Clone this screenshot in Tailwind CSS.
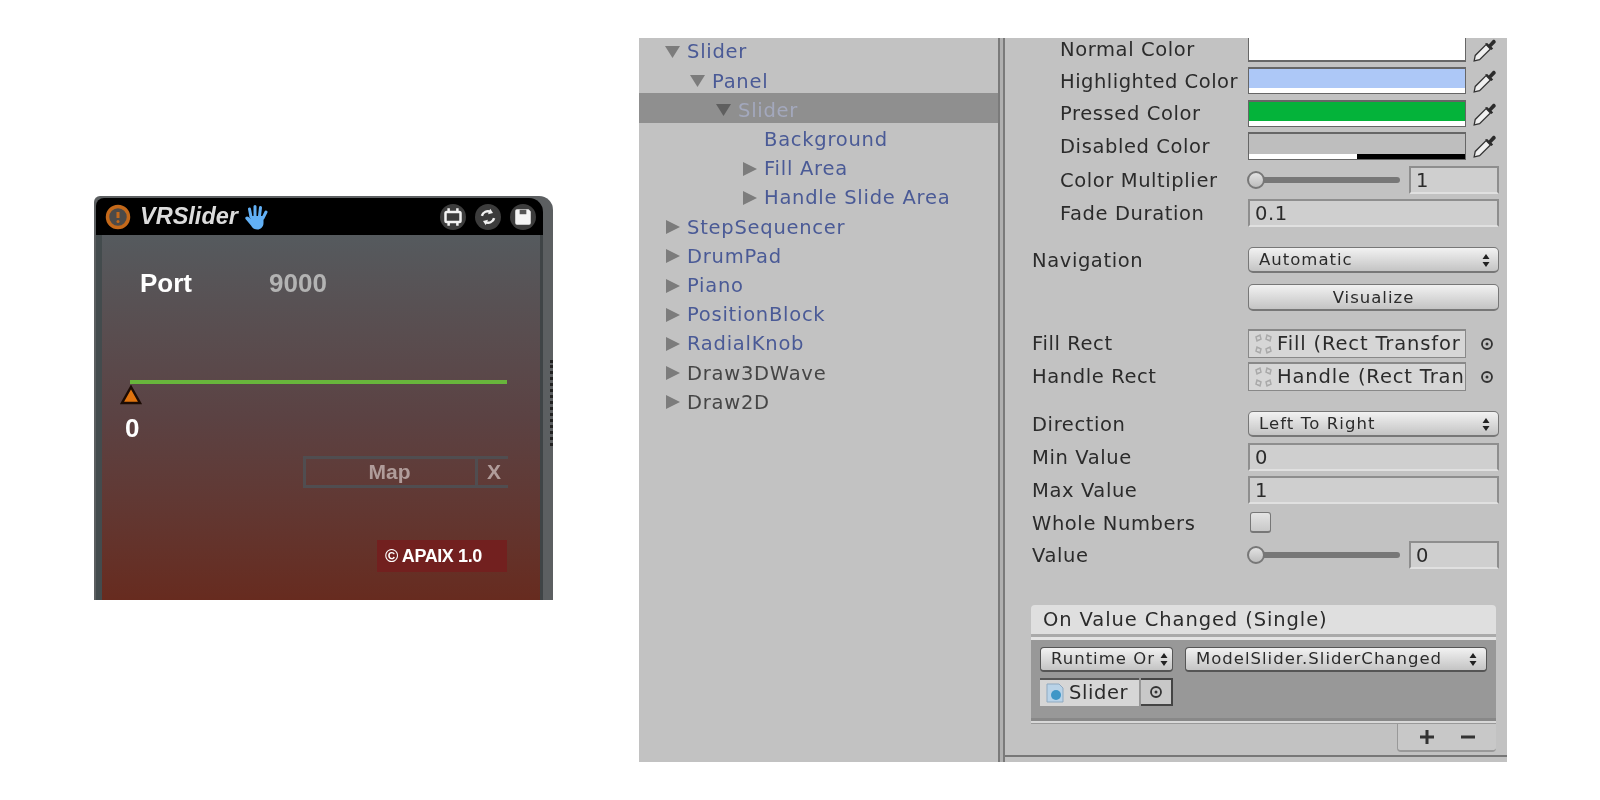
<!DOCTYPE html>
<html lang="en">
<head>
  <meta charset="UTF-8" />
  <title>VRSlider</title>
  <script src="https://cdn.jsdelivr.net/npm/@tailwindcss/browser@4"></script>
</head>
<body class="bg-white h-[800px] overflow-hidden">
  <div class="flex items-start">

    <!-- VRSlider device -->
    <div class="ml-[94px] mt-[196px] w-[459px] h-[404px] bg-[#5c5f61] rounded-tr-[14px] rounded-tl-[6px] flex flex-col font-['Liberation_Sans',sans-serif] blur-[0.5px] relative">
      <div class="ml-[2px] mt-[2px] w-[447px] h-[37px] bg-black rounded-tl-[8px] rounded-tr-[14px] flex items-center shrink-0">
        <svg class="ml-[9px] w-[26px] h-[26px]" viewBox="0 0 26 26"><circle cx="13" cy="13" r="10.5" fill="#4c4a48" stroke="#c4691a" stroke-width="3.5"/><path d="M13 8v6" stroke="#c4691a" stroke-width="3"/><circle cx="13" cy="17.5" r="1.5" fill="#c4691a"/></svg>
        <span class="ml-[9px] text-[23.500px] font-bold italic text-[#dcdcdc] leading-none">VRSlider</span>
        <svg class="ml-[6px] w-[24px] h-[28px]" viewBox="0 0 24 28"><path d="M7 14L5.500 6M11 13V3.500M15.500 13L16.500 4.500M19 15L22 9" stroke="#62b0f5" stroke-width="3" stroke-linecap="round" fill="none"/><path d="M5.500 13h14v7c0 4-3 6.500-6 6.500-3.500 0-5-1.500-6.500-4L1.500 16c-1-2 1.500-3.500 3-2l2.500 2z" fill="#62b0f5"/></svg>
        <div class="ml-auto mr-[7px] flex gap-[9px]">
          <div class="w-[26px] h-[26px] rounded-full bg-[#3c3c3c] flex items-center justify-center">
            <svg class="w-[20px] h-[20px]" viewBox="0 0 16 16"><rect x="2" y="4" width="12" height="8" rx="1" fill="none" stroke="#f2f2f2" stroke-width="2"/><path d="M4.500 1v3M11.500 1v3M4.500 12v3M11.500 12v3" stroke="#f2f2f2" stroke-width="2"/></svg>
          </div>
          <div class="w-[26px] h-[26px] rounded-full bg-[#3c3c3c] flex items-center justify-center">
            <svg class="w-[20px] h-[20px]" viewBox="0 0 18 18"><path d="M3.500 8a5.500 5.500 0 0 1 8-3.500" fill="none" stroke="#f2f2f2" stroke-width="2.200"/><path d="M11 1.500l2.500 4-4.500 1z" fill="#f2f2f2"/><path d="M14.500 10a5.500 5.500 0 0 1-8 3.500" fill="none" stroke="#f2f2f2" stroke-width="2.200"/><path d="M7 16.500l-2.500-4 4.500-1z" fill="#f2f2f2"/></svg>
          </div>
          <div class="w-[26px] h-[26px] rounded-full bg-[#3c3c3c] flex items-center justify-center">
            <svg class="w-[20px] h-[20px]" viewBox="0 0 18 18"><path d="M2 3.500A1.500 1.500 0 0 1 3.500 2H14l2 2v10.500a1.500 1.500 0 0 1-1.500 1.500h-11A1.500 1.500 0 0 1 2 14.500z" fill="#f4f4f4"/><rect x="6" y="2.500" width="6" height="4" fill="#555"/></svg>
          </div>
        </div>
      </div>
      <div class="ml-[2px] w-[447px] flex-1 bg-linear-to-b from-[#555a5e] via-[#5b4243] to-[#672b1f] border-l-[6px] border-r-[3px] border-l-[#434b4d] border-r-[#3f4446] relative">
        <div class="flex mt-[28px] ml-[38px] text-[26px] font-bold leading-[40px]">
          <span class="text-white w-[129px]">Port</span>
          <span class="text-[#b3b3b3]">9000</span>
        </div>
        <div class="mt-[77px] ml-[28px] w-[377px] h-[4px] bg-[#68b53c]"></div>
        <svg class="ml-[18px] mt-[1px] w-[22px] h-[20px]" viewBox="0 0 22 20"><path d="M11 2L20 18H2z" fill="#e0740f" stroke="#1c0c05" stroke-width="2.500"/></svg>
        <div class="ml-[23px] mt-[5px] text-[26px] font-bold text-white leading-[36px]">0</div>
        <div class="mt-[10px] ml-[201px] flex h-[32px] w-[205px] text-[21px] font-bold text-[#b09c9a]">
          <div class="w-[175px] border-[3px] border-[#504d50] flex items-center justify-center pr-[2px]">Map</div>
          <div class="flex-1 border-y-[3px] border-[#504d50] flex items-center justify-center pl-[2px]">X</div>
        </div>
        <div class="mt-[52px] ml-[275px] w-[130px] h-[32px] bg-[#72201f] flex items-center pl-[8px] text-[18px] font-bold text-white tracking-[-0.4px]">© APAIX 1.0</div>
      </div>
      <div class="absolute right-0 top-[164px] h-[86px] w-[3px] border-r-[3px] border-dotted border-[#222]"></div>
    </div>

    <!-- Unity editor -->
    <div class="ml-[86px] mt-[38px] w-[868px] h-[724px] bg-[#c2c2c2] flex font-['DejaVu_Sans',sans-serif] text-[20px] text-[#2b2b2b] blur-[0.5px]">

      <!-- Hierarchy -->
      <div class="w-[359px] text-[#4a5a96] text-[19.500px] tracking-[0.75px]">
        <div class="h-[26.200px] pt-[2px] pl-[26px] flex items-center">
          <svg class="w-[22px] h-[14px] shrink-0" viewBox="0 0 22 14"><path d="M0 1h15L7.500 13z" fill="#7c7c7c"/></svg>Slider
        </div>
        <div class="h-[29.200px] pt-[5px] pl-[51px] flex items-center">
          <svg class="w-[22px] h-[14px] shrink-0" viewBox="0 0 22 14"><path d="M0 1h15L7.500 13z" fill="#7c7c7c"/></svg>Panel
        </div>
        <div class="h-[29.200px] pt-[5px] pl-[77px] flex items-center bg-[#8f8f8f] text-[#a3a8bd]">
          <svg class="w-[22px] h-[14px] shrink-0" viewBox="0 0 22 14"><path d="M0 1h15L7.500 13z" fill="#5f5f5f"/></svg>Slider
        </div>
        <div class="h-[29.200px] pt-[5px] pl-[125px] flex items-center">Background</div>
        <div class="h-[29.200px] pt-[5px] pl-[103px] flex items-center">
          <svg class="w-[22px] h-[16px] shrink-0" viewBox="0 0 22 16"><path d="M1 1v14l14-7z" fill="#7c7c7c"/></svg>Fill Area
        </div>
        <div class="h-[29.200px] pt-[5px] pl-[103px] flex items-center">
          <svg class="w-[22px] h-[16px] shrink-0" viewBox="0 0 22 16"><path d="M1 1v14l14-7z" fill="#7c7c7c"/></svg>Handle Slide Area
        </div>
        <div class="h-[29.200px] pt-[5px] pl-[26px] flex items-center">
          <svg class="w-[22px] h-[16px] shrink-0" viewBox="0 0 22 16"><path d="M1 1v14l14-7z" fill="#7c7c7c"/></svg>StepSequencer
        </div>
        <div class="h-[29.200px] pt-[5px] pl-[26px] flex items-center">
          <svg class="w-[22px] h-[16px] shrink-0" viewBox="0 0 22 16"><path d="M1 1v14l14-7z" fill="#7c7c7c"/></svg>DrumPad
        </div>
        <div class="h-[29.200px] pt-[5px] pl-[26px] flex items-center">
          <svg class="w-[22px] h-[16px] shrink-0" viewBox="0 0 22 16"><path d="M1 1v14l14-7z" fill="#7c7c7c"/></svg>Piano
        </div>
        <div class="h-[29.200px] pt-[5px] pl-[26px] flex items-center">
          <svg class="w-[22px] h-[16px] shrink-0" viewBox="0 0 22 16"><path d="M1 1v14l14-7z" fill="#7c7c7c"/></svg>PositionBlock
        </div>
        <div class="h-[29.200px] pt-[5px] pl-[26px] flex items-center">
          <svg class="w-[22px] h-[16px] shrink-0" viewBox="0 0 22 16"><path d="M1 1v14l14-7z" fill="#7c7c7c"/></svg>RadialKnob
        </div>
        <div class="h-[29.200px] pt-[5px] pl-[26px] flex items-center text-[#454545]">
          <svg class="w-[22px] h-[16px] shrink-0" viewBox="0 0 22 16"><path d="M1 1v14l14-7z" fill="#7c7c7c"/></svg>Draw3DWave
        </div>
        <div class="h-[29.200px] pt-[5px] pl-[26px] flex items-center text-[#454545]">
          <svg class="w-[22px] h-[16px] shrink-0" viewBox="0 0 22 16"><path d="M1 1v14l14-7z" fill="#7c7c7c"/></svg>Draw2D
        </div>
      </div>

      <div class="w-[7px] border-x-[2px] border-[#7a7a7a] bg-[#b0b0b0]"></div>

      <!-- Inspector -->
      <div class="flex-1 flex flex-col">
        <div class="h-[719px] border-b-[2px] border-[#777] pl-[27px] tracking-[0.6px] text-[19.500px]">

          <div class="flex items-center h-[24px]">
            <span class="w-[216px] pl-[28px]">Normal Color</span>
            <div class="w-[218px] h-full bg-white border-b-2 border-x border-[#666]"></div>
            <svg class="ml-[6px] w-[26px] h-[26px]" viewBox="0 0 24 24"><path d="M2 22l1-5L13 7l4 4L7 21z" fill="#f0f0f0" stroke="#333" stroke-width="1.200"/><path d="M12 6l6 6 1.500-1.500-1.500-1.500 3.500-3.500c1.500-1.500-1-4-2.500-2.500L15.500 7l-1.500-1.500z" fill="#2c2c2c"/></svg>
          </div>

          <div class="flex items-center h-[27px] mt-[5px]">
            <span class="w-[216px] pl-[28px] pt-[2px] whitespace-nowrap tracking-[0.5px]">Highlighted Color</span>
            <div class="w-[218px] h-full border border-[#666] border-t-2 flex flex-col">
              <div class="flex-1 bg-[#adc8f7]"></div><div class="h-[5px] bg-white"></div>
            </div>
            <svg class="ml-[6px] w-[26px] h-[26px]" viewBox="0 0 24 24"><path d="M2 22l1-5L13 7l4 4L7 21z" fill="#f0f0f0" stroke="#333" stroke-width="1.200"/><path d="M12 6l6 6 1.500-1.500-1.500-1.500 3.500-3.500c1.500-1.500-1-4-2.500-2.500L15.500 7l-1.500-1.500z" fill="#2c2c2c"/></svg>
          </div>

          <div class="flex items-center h-[27px] mt-[6px]">
            <span class="w-[216px] pl-[28px]">Pressed Color</span>
            <div class="w-[218px] h-full border border-[#666] border-t-2 flex flex-col">
              <div class="flex-1 bg-[#04b33a]"></div><div class="h-[5px] bg-white"></div>
            </div>
            <svg class="ml-[6px] w-[26px] h-[26px]" viewBox="0 0 24 24"><path d="M2 22l1-5L13 7l4 4L7 21z" fill="#f0f0f0" stroke="#333" stroke-width="1.200"/><path d="M12 6l6 6 1.500-1.500-1.500-1.500 3.500-3.500c1.500-1.500-1-4-2.500-2.500L15.500 7l-1.500-1.500z" fill="#2c2c2c"/></svg>
          </div>

          <div class="flex items-center h-[28px] mt-[5px]">
            <span class="w-[216px] pl-[28px] pt-[2px]">Disabled Color</span>
            <div class="w-[218px] h-full border border-[#666] border-t-2 flex flex-col">
              <div class="flex-1 bg-[#bebebe]"></div>
              <div class="h-[5px] flex"><div class="w-[108px] bg-white"></div><div class="flex-1 bg-black"></div></div>
            </div>
            <svg class="ml-[6px] w-[26px] h-[26px]" viewBox="0 0 24 24"><path d="M2 22l1-5L13 7l4 4L7 21z" fill="#f0f0f0" stroke="#333" stroke-width="1.200"/><path d="M12 6l6 6 1.500-1.500-1.500-1.500 3.500-3.500c1.500-1.500-1-4-2.500-2.500L15.500 7l-1.500-1.500z" fill="#2c2c2c"/></svg>
          </div>

          <div class="flex items-center h-[28px] mt-[6px]">
            <span class="w-[216px] pl-[28px] pt-[2px]">Color Multiplier</span>
            <div class="w-[152px] h-[6px] bg-[#777] rounded-full relative">
              <div class="absolute left-[-1px] top-[-6px] w-[18px] h-[18px] rounded-full bg-linear-to-b from-[#e2e2e2] to-[#bdbdbd] border-2 border-[#777]"></div>
            </div>
            <div class="ml-[9px] w-[90px] h-full bg-[#cfcfcf] border-2 border-[#8e8e8e] border-b-[#e0e0e0] pl-[5px] leading-[26px]">1</div>
          </div>

          <div class="flex items-center h-[28px] mt-[5px]">
            <span class="w-[216px] pl-[28px] pt-[2px]">Fade Duration</span>
            <div class="w-[251px] h-full bg-[#cfcfcf] border-2 border-[#8e8e8e] border-b-[#e0e0e0] pl-[5px] leading-[26px]">0.1</div>
          </div>

          <div class="flex items-center h-[26px] mt-[20px]">
            <span class="w-[216px] pt-[2px]">Navigation</span>
            <div class="w-[251px] h-full bg-linear-to-b from-[#f2f2f2] to-[#c4c4c4] border border-[#777] border-b-2 rounded-[5px] flex items-center justify-between pl-[10px] pr-[8px] pt-[2px] text-[16.500px] tracking-[1px]">
              Automatic
              <svg class="w-[8px] h-[13px]" viewBox="0 0 8 13"><path d="M4 0l3.500 5h-7zM4 13l3.500-5h-7z" fill="#222"/></svg>
            </div>
          </div>

          <div class="flex items-center h-[27px] mt-[11px]">
            <span class="w-[216px]"></span>
            <div class="w-[251px] h-full bg-linear-to-b from-[#f2f2f2] to-[#c4c4c4] border border-[#777] border-b-2 rounded-[5px] flex items-center justify-center pt-[2px] text-[16.500px] tracking-[1px]">Visualize</div>
          </div>

          <div class="flex items-center h-[29px] mt-[18px]">
            <span class="w-[216px]">Fill Rect</span>
            <div class="w-[218px] h-full bg-[#d6d6d6] border border-[#888] border-t-2 flex items-center overflow-hidden whitespace-nowrap tracking-[0.85px]">
              <svg class="w-[27px] h-[24px] shrink-0 ml-[1px]" viewBox="0 0 25 24"><path d="M5 5l4-2 1 4-4 2zM20 5l-4-2-1 4 4 2zM5 19l4 2 1-4-4-2zM20 19l-4 2-1-4 4-2z" fill="none" stroke="#a9a9a9" stroke-width="1.500"/></svg>Fill (Rect Transfor
            </div>
            <svg class="ml-[14px] w-[14px] h-[14px]" viewBox="0 0 14 14"><circle cx="7" cy="7" r="5" fill="none" stroke="#333" stroke-width="1.800"/><circle cx="7" cy="7" r="1.500" fill="#333"/></svg>
          </div>

          <div class="flex items-center h-[29px] mt-[4px]">
            <span class="w-[216px]">Handle Rect</span>
            <div class="w-[218px] h-full bg-[#d6d6d6] border border-[#888] border-t-2 flex items-center overflow-hidden whitespace-nowrap tracking-[0.85px]">
              <svg class="w-[27px] h-[24px] shrink-0 ml-[1px]" viewBox="0 0 25 24"><path d="M5 5l4-2 1 4-4 2zM20 5l-4-2-1 4 4 2zM5 19l4 2 1-4-4-2zM20 19l-4 2-1-4 4-2z" fill="none" stroke="#a9a9a9" stroke-width="1.500"/></svg>Handle (Rect Tran
            </div>
            <svg class="ml-[14px] w-[14px] h-[14px]" viewBox="0 0 14 14"><circle cx="7" cy="7" r="5" fill="none" stroke="#333" stroke-width="1.800"/><circle cx="7" cy="7" r="1.500" fill="#333"/></svg>
          </div>

          <div class="flex items-center h-[26px] mt-[20px]">
            <span class="w-[216px] pt-[2px]">Direction</span>
            <div class="w-[251px] h-full bg-linear-to-b from-[#f2f2f2] to-[#c4c4c4] border border-[#777] border-b-2 rounded-[5px] flex items-center justify-between pl-[10px] pr-[8px] pt-[2px] text-[16.500px] tracking-[1.100px]">
              Left To Right
              <svg class="w-[8px] h-[13px]" viewBox="0 0 8 13"><path d="M4 0l3.500 5h-7zM4 13l3.500-5h-7z" fill="#222"/></svg>
            </div>
          </div>

          <div class="flex items-center h-[28px] mt-[6px]">
            <span class="w-[216px] pt-[2px]">Min Value</span>
            <div class="w-[251px] h-full bg-[#cfcfcf] border-2 border-[#8e8e8e] border-b-[#e0e0e0] pl-[5px] leading-[26px]">0</div>
          </div>

          <div class="flex items-center h-[28px] mt-[5px]">
            <span class="w-[216px] pt-[2px]">Max Value</span>
            <div class="w-[251px] h-full bg-[#cfcfcf] border-2 border-[#8e8e8e] border-b-[#e0e0e0] pl-[5px] leading-[26px]">1</div>
          </div>

          <div class="flex items-center h-[28px] mt-[4px]">
            <span class="w-[216px] pt-[3px]">Whole Numbers</span>
            <div class="ml-[2px] w-[21px] h-[21px] bg-linear-to-b from-[#e4e4e4] to-[#c8c8c8] border border-[#777] border-b-2 rounded-[3px]"></div>
          </div>

          <div class="flex items-center h-[28px] mt-[5px]">
            <span class="w-[216px] pt-[2px]">Value</span>
            <div class="w-[152px] h-[6px] bg-[#777] rounded-full relative">
              <div class="absolute left-[-1px] top-[-6px] w-[18px] h-[18px] rounded-full bg-linear-to-b from-[#e2e2e2] to-[#bdbdbd] border-2 border-[#777]"></div>
            </div>
            <div class="ml-[9px] w-[90px] h-full bg-[#cfcfcf] border-2 border-[#8e8e8e] border-b-[#e0e0e0] pl-[5px] leading-[26px]">0</div>
          </div>

          <!-- On Value Changed -->
          <div class="mt-[36px] ml-[-1px] w-[465px]">
            <div class="h-[32px] bg-[#dfdfdf] border-b-[3px] border-[#aaa] rounded-t-[4px] pl-[12px] flex items-center tracking-[0.9px]">On Value Changed (Single)</div>
            <div class="h-[3px] bg-[#e4e4e4]"></div>
            <div class="h-[81px] bg-[#989898] border-b-[3px] border-[#888] px-[9px] pt-[7px] text-[16.500px] tracking-[1px]">
              <div class="flex gap-[12px] h-[25px]">
                <div class="w-[133px] bg-linear-to-b from-[#f2f2f2] to-[#c4c4c4] border border-[#555] border-b-2 rounded-[4px] flex items-center justify-between pl-[10px] pr-[4px] whitespace-nowrap">
                  Runtime Or
                  <svg class="w-[8px] h-[13px] shrink-0" viewBox="0 0 8 13"><path d="M4 0l3.500 5h-7zM4 13l3.500-5h-7z" fill="#222"/></svg>
                </div>
                <div class="flex-1 bg-linear-to-b from-[#f2f2f2] to-[#c4c4c4] border border-[#555] border-b-2 rounded-[4px] flex items-center justify-between pl-[10px] pr-[9px]">
                  ModelSlider.SliderChanged
                  <svg class="w-[8px] h-[13px]" viewBox="0 0 8 13"><path d="M4 0l3.500 5h-7zM4 13l3.500-5h-7z" fill="#222"/></svg>
                </div>
              </div>
              <div class="flex mt-[6px] h-[28px] w-[133px] text-[19.500px] tracking-[0.6px]">
                <div class="w-[99px] bg-[#d6d6d6] border-t-2 border-[#555] flex items-center">
                  <svg class="w-[24px] h-[22px] shrink-0 ml-[5px]" viewBox="0 0 24 22"><path d="M2 2h12l4 4v14H2z" fill="#b9d3e8" stroke="#8fa9c0"/><circle cx="11" cy="13" r="5" fill="#3f97c7"/></svg>Slider
                </div>
                <div class="ml-[2px] flex-1 bg-[#c8c8c8] border-t-2 border-r-2 border-b-2 border-[#444] flex items-center justify-center">
                  <svg class="w-[14px] h-[14px]" viewBox="0 0 14 14"><circle cx="7" cy="7" r="5" fill="none" stroke="#333" stroke-width="1.800"/><circle cx="7" cy="7" r="1.500" fill="#333"/></svg>
                </div>
              </div>
            </div>
            <div class="h-[3px] bg-[#d8d8d8] border-b border-[#999]"></div>
            <div class="ml-auto w-[99px] h-[28px] bg-[#c8c8c8] border-b-2 border-l border-[#999] rounded-b-[4px] flex items-center justify-around px-[8px]">
              <svg class="w-[16px] h-[16px]" viewBox="0 0 16 16"><path d="M8 1v14M1 8h14" stroke="#333" stroke-width="3"/></svg>
              <svg class="w-[16px] h-[16px]" viewBox="0 0 16 16"><path d="M1 8h14" stroke="#333" stroke-width="3"/></svg>
            </div>
          </div>
        </div>
      </div>
    </div>
  </div>
</body>
</html>
